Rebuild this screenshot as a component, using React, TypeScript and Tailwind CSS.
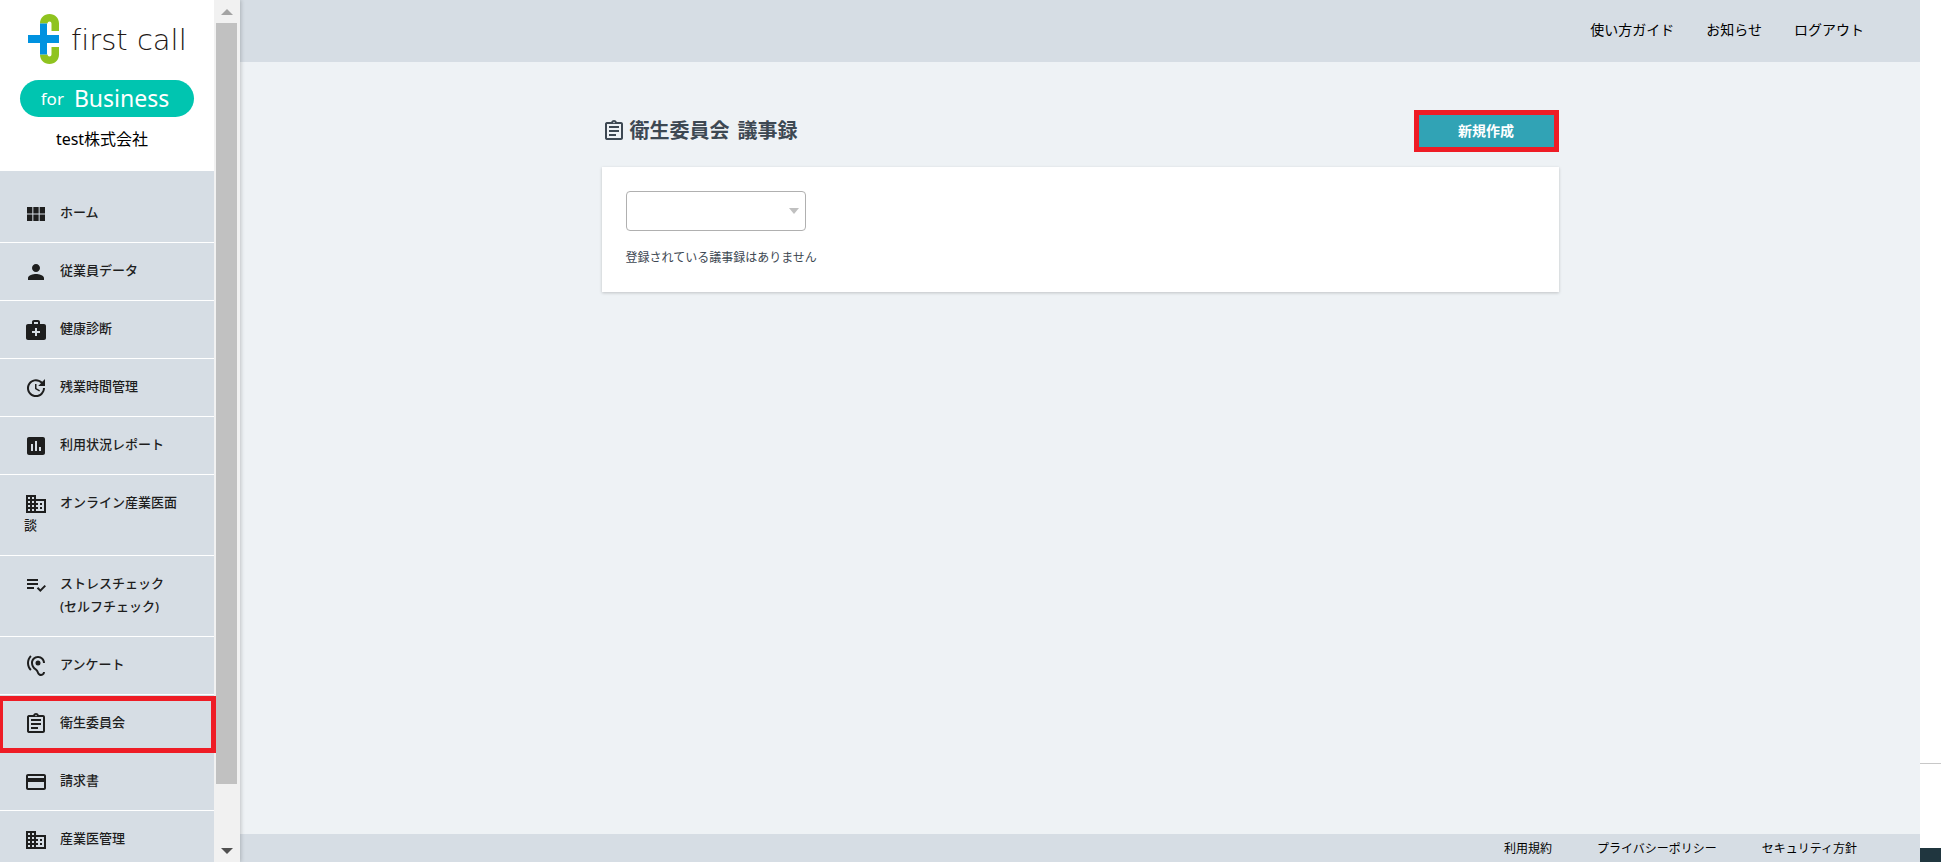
import type { ReactNode } from 'react';
import type { IconType } from 'react-icons';
import {
  MdAssessment,
  MdBusiness,
  MdHearing,
  MdMedicalServices,
  MdOutlineAssignment,
  MdPayment,
  MdPerson,
  MdPlaylistAddCheck,
  MdUpdate,
  MdViewModule,
} from 'react-icons/md';

type MenuItem = {
  label: ReactNode;
  icon: IconType;
  highlighted?: boolean;
};

const menuItems: MenuItem[] = [
  { label: 'ホーム', icon: MdViewModule },
  { label: '従業員データ', icon: MdPerson },
  { label: '健康診断', icon: MdMedicalServices },
  { label: '残業時間管理', icon: MdUpdate },
  { label: '利用状況レポート', icon: MdAssessment },
  { label: 'オンライン産業医面談', icon: MdBusiness },
  {
    label: (
      <>
        ストレスチェック
        <br />
        <span className="pl-9">(セルフチェック)</span>
      </>
    ),
    icon: MdPlaylistAddCheck,
  },
  { label: 'アンケート', icon: MdHearing },
  { label: '衛生委員会', icon: MdOutlineAssignment, highlighted: true },
  { label: '請求書', icon: MdPayment },
  { label: '産業医管理', icon: MdBusiness },
];

function LogoMark() {
  return (
    <svg width="31" height="50" viewBox="0 0 31 50" aria-hidden="true">
      <path
        d="M12 9.5C12 4 16 0 21.5 0S31 4 31 9.5V17H23.500V9.500a2 2 0 0 0-4 0Z"
        fill="#8fc31f"
      />
      <path
        d="M12 40.5C12 46 16 50 21.5 50S31 46 31 40.5V33H23.500v7.500a2 2 0 0 1-4 0Z"
        fill="#8fc31f"
      />
      <path d="M12 9.500h7V21h12v8H19v11.500h-7V29H0v-8h12Z" fill="#0092e0" />
    </svg>
  );
}

function Brand() {
  return (
    <div className="flex h-[171px] shrink-0 flex-col items-center bg-white pt-3.5">
      <a href="#" className="flex h-[50px] w-full items-center gap-3 pl-7">
        <LogoMark />
        <span className="pt-0.5 font-['DejaVu_Sans'] text-[29px] leading-8 font-extralight whitespace-nowrap text-[#231815] [font-variant-ligatures:none]">
          first call
        </span>
      </a>
      <p className="mt-4 flex h-[37px] w-[174px] items-center justify-center gap-2.5 rounded-full bg-[#00c5b0] pr-1 font-['Noto_Sans'] text-white">
        <span className="text-[17px]">for</span>
        <span className="text-[23px]">Business</span>
      </p>
      <p className="mt-2.5 pr-2.5 text-base text-black">test株式会社</p>
    </div>
  );
}

function SideMenu() {
  return (
    <nav className="grow bg-[#d6dde4] pt-3.5">
      <ul>
        {menuItems.map(({ label, icon: Icon, highlighted }, i) => (
          <li key={i} className="relative border-b border-white">
            <a
              href="#"
              className="block pt-4 pr-8 pb-[18px] pl-6 text-[13px] leading-[23px] font-medium text-[#1e1e1e]"
            >
              <Icon className="-my-1 mr-3 inline-block size-6 align-middle" />
              {label}
            </a>
            {highlighted && (
              <span className="absolute top-px -right-0.5 -bottom-px left-0 z-10 border-5 border-l-3 border-[#ee1c25]" />
            )}
          </li>
        ))}
      </ul>
    </nav>
  );
}

function ScrollTrack() {
  return (
    <div
      className="flex w-[26px] shrink-0 flex-col items-center bg-[#f1f1f1] pr-px"
      aria-hidden="true"
    >
      <div className="flex h-[23px] shrink-0 items-center">
        <svg width="12" height="6" viewBox="0 0 12 6">
          <path d="M6 0l6 6H0Z" fill="#a3a3a3" />
        </svg>
      </div>
      <div className="w-[21px] grow bg-[#c1c1c1]" />
      <div className="flex h-[78px] shrink-0 items-end pb-2">
        <svg width="12" height="6" viewBox="0 0 12 6">
          <path d="M6 6l6-6H0Z" fill="#505050" />
        </svg>
      </div>
    </div>
  );
}

export default function App() {
  return (
    <div className="flex h-screen overflow-hidden bg-white font-['Noto_Sans','Noto_Sans_CJK_JP',sans-serif] text-[#3d4852]">
      <aside className="z-10 flex shrink-0 shadow-[1px_0_4px_rgba(0,0,0,0.2)]">
        <div className="flex w-[214px] flex-col">
          <Brand />
          <SideMenu />
        </div>
        <ScrollTrack />
      </aside>

      <div className="flex min-w-0 grow flex-col bg-[#eef2f5]">
        <header className="flex h-[62px] shrink-0 items-center justify-end gap-8 bg-[#d6dde4] pr-14 pb-0.5 text-sm text-black">
          <a href="#">使い方ガイド</a>
          <a href="#">お知らせ</a>
          <a href="#">ログアウト</a>
        </header>

        <main className="mx-auto w-full max-w-[957px] grow pt-12">
          <div className="flex items-center justify-between">
            <h1 className="flex items-center gap-1 text-xl font-bold">
              <MdOutlineAssignment className="size-6" />
              <span className="flex gap-2">
                <span>衛生委員会</span> <span>議事録</span>
              </span>
            </h1>
            <button
              type="button"
              className="h-[42px] w-[145px] border-5 border-[#ee1c25] bg-[#31a3b5] text-sm font-bold text-white"
            >
              新規作成
            </button>
          </div>

          <section className="mt-[15px] bg-white p-6 shadow-[0_1px_3px_rgba(0,0,0,0.2)]">
            <div className="relative w-[180px]">
              <select
                aria-label="年度"
                className="block h-10 w-full appearance-none rounded border border-[#b0b0b0] bg-white px-3 text-sm"
              />
              <svg
                className="pointer-events-none absolute top-[17px] right-[7px]"
                width="10"
                height="6"
                viewBox="0 0 10 6"
                aria-hidden="true"
              >
                <path d="M0 0h10L5 6Z" fill="#c0c0c0" />
              </svg>
            </div>
            <p className="mt-[17px] text-xs leading-5">登録されている議事録はありません</p>
          </section>
        </main>

        <footer className="flex h-7 shrink-0 items-center justify-end gap-[45px] bg-[#d6dde4] pt-0.5 pr-[63px] text-xs text-black">
          <a href="#">利用規約</a>
          <a href="#">プライバシーポリシー</a>
          <a href="#">セキュリティ方針</a>
        </footer>
      </div>

      <div className="flex w-[21px] shrink-0 flex-col justify-end bg-white" aria-hidden="true">
        <div className="h-[85px] border-t border-[#c8c8c8]" />
        <div className="h-3.5 bg-[#20363f]" />
      </div>
    </div>
  );
}
